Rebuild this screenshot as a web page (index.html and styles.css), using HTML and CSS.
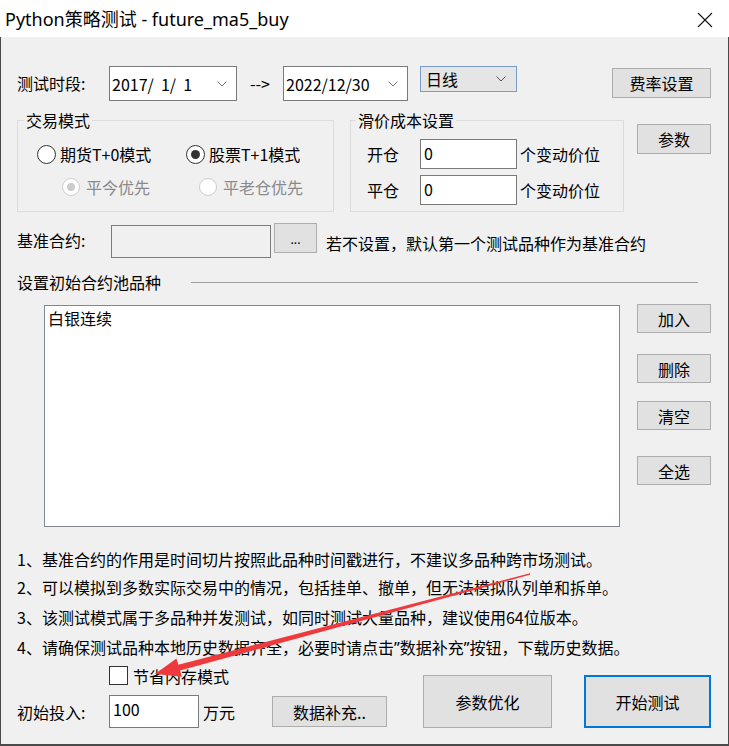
FILE: index.html
```html
<!DOCTYPE html>
<html lang="zh-CN">
<head>
<meta charset="utf-8">
<title>Python策略测试 - future_ma5_buy</title>
<link rel="stylesheet" href="styles.css">
</head>
<body>
<div class="window">
  <div class="titlebar">
    <span class="title">Python策略测试 - future_ma5_buy</span>
    <svg class="close" viewBox="0 0 16 16" width="16" height="16"><path d="M1 1 L15 15 M15 1 L1 15" stroke="#111" stroke-width="1.1" fill="none"/></svg>
  </div>
  <div class="content">
    <div class="row r1">
      <span class="lbl-time">测试时段:</span>
      <div class="combo c1"><span class="ctext">2017/&nbsp;&nbsp;1/&nbsp;&nbsp;1</span><svg class="chev" viewBox="0 0 10 6" width="10" height="6"><path d="M0.5 0.5 L5 5 L9.5 0.5" stroke="#777" stroke-width="1" fill="none"/></svg></div>
      <span class="to">--&gt;</span>
      <div class="combo c2"><span class="ctext">2022/12/30</span><svg class="chev" viewBox="0 0 10 6" width="10" height="6"><path d="M0.5 0.5 L5 5 L9.5 0.5" stroke="#777" stroke-width="1" fill="none"/></svg></div>
      <div class="combo c3"><span class="ctext">日线</span><svg class="chev" viewBox="0 0 10 6" width="10" height="6"><path d="M0.5 0.5 L5 5 L9.5 0.5" stroke="#555" stroke-width="1" fill="none"/></svg></div>
      <div class="btn b-rate">费率设置</div>
    </div>

    <div class="row r2">
      <fieldset class="grp g1">
        <legend>交易模式</legend>
        <div class="rrow rr1">
          <div class="opt o1"><span class="radio"></span><span>期货T+0模式</span></div>
          <div class="opt"><span class="radio checked"></span><span>股票T+1模式</span></div>
        </div>
        <div class="rrow rr2">
          <div class="opt o3 disabled"><span class="radio small checked"></span><span>平今优先</span></div>
          <div class="opt disabled"><span class="radio small"></span><span>平老仓优先</span></div>
        </div>
      </fieldset>
      <fieldset class="grp g2">
        <legend>滑价成本设置</legend>
        <div class="prow">
          <span class="plbl">开仓</span>
          <div class="inp">0</div>
          <span class="unit">个变动价位</span>
        </div>
        <div class="prow prow2">
          <span class="plbl">平仓</span>
          <div class="inp">0</div>
          <span class="unit">个变动价位</span>
        </div>
      </fieldset>
      <div class="btn b-param">参数</div>
    </div>

    <div class="row r3">
      <span class="lbl-base">基准合约:</span>
      <div class="inp-base"></div>
      <div class="btn b-dots">...</div>
      <span class="hint">若不设置，默认第一个测试品种作为基准合约</span>
    </div>

    <div class="row r4">
      <span>设置初始合约池品种</span>
      <div class="sep"></div>
    </div>

    <div class="row r5">
      <div class="list">白银连续</div>
      <div class="side">
        <div class="btn sb">加入</div>
        <div class="btn sb sb2">删除</div>
        <div class="btn sb sb3">清空</div>
        <div class="btn sb sb4">全选</div>
      </div>
    </div>

    <div class="notes">
      <p class="n1">1、基准合约的作用是时间切片按照此品种时间戳进行，不建议多品种跨市场测试。</p>
      <p class="n2">2、可以模拟到多数实际交易中的情况，包括挂单、撤单，但无法模拟队列单和拆单。</p>
      <p class="n3">3、该测试模式属于多品种并发测试，如同时测试大量品种，建议使用64位版本。</p>
      <p class="n3">4、请确保测试品种本地历史数据齐全，必要时请点击<span class="q">”</span>数据补充<span class="q">”</span>按钮，下载历史数据。</p>
    </div>

    <div class="row bottom">
      <div class="left-col">
        <div class="chk-row"><span class="chk"></span><span class="chk-text">节省内存模式</span></div>
        <div class="in-row">
          <span class="lbl-amt">初始投入:</span>
          <div class="inp-amt">100</div>
          <span class="wan">万元</span>
          <div class="btn b-data">数据补充..</div>
        </div>
      </div>
      <div class="btn big b-opt">参数优化</div>
      <div class="btn big b-start">开始测试</div>
    </div>
  </div>

  <svg class="arrow" viewBox="0 0 729 746" width="729" height="746">
    <polygon points="530,573.3 178.4,664.7 176.4,658.4 155,674 182,676.8 180,670.5 530,574.7" fill="#ef3a3d"/>
  </svg>
</div>
</body>
</html>
```

FILE: styles.css
```css
* { box-sizing: border-box; }

body {
  margin: 0;
  font-family: "Noto Sans CJK SC", sans-serif;
  font-size: 16px;
  line-height: 20px;
  color: #000;
  background: #f0f0f0;
}

.window {
  width: 729px;
  height: 746px;
  position: relative;
  display: flex;
  flex-direction: column;
}

.titlebar {
  height: 37px;
  background: #fff;
  display: flex;
  align-items: center;
  padding: 0 16px 0 5px;
}

.title {
  font-family: "Noto Sans", "Noto Sans CJK SC", sans-serif;
  font-size: 18px;
  line-height: 24px;
}

.close {
  margin-left: auto;
  margin-top: 3px;
}

.content {
  flex: 1;
  background: #f0f0f0;
  border: 1px solid #4a4a4a;
  border-top: none;
  border-bottom-width: 2px;
  padding: 0 17px 0 16px;
}

.row { display: flex; }

/* Row 1 */
.r1 { margin-top: 29px; align-items: flex-start; height: 35px; }
.lbl-time { width: 92px; line-height: 35px; }
.combo {
  display: flex;
  align-items: center;
  background: #fff;
  border: 1px solid #7a7a7a;
  padding-left: 2px;
}
.combo .chev { margin-left: auto; margin-right: 9px; }
.c1 { width: 128px; height: 35px; }
.c2 { width: 125px; height: 35px; }
.c3 {
  margin-left: 12px;
  width: 97px;
  height: 26px;
  background: #e5e5e5;
  border-color: #7a9cc8;
  padding-left: 5px;
  align-items: flex-start;
  padding-top: 2px;
}
.c3 .chev { margin-top: 7px; margin-right: 10px; }
.ctext { white-space: pre; }
.to { margin-left: 13px; width: 33px; line-height: 35px; }

.btn {
  background: #e1e1e1;
  border: 1px solid #adadad;
  display: flex;
  align-items: center;
  justify-content: center;
}
.b-rate { margin-left: auto; margin-top: 2px; width: 99px; height: 30px; }

/* Row 2 */
.r2 { margin-top: 10px; align-items: flex-start; }
.grp {
  margin: 0;
  border: 1px solid #dcdcdc;
  min-width: 0;
}
.grp legend {
  line-height: 18px;
  padding: 0 2px;
  margin-left: 6px;
}
.g1 { width: 317px; padding: 15px 0 14px 0; }
.g2 { width: 274px; margin-left: 16px; padding: 10px 0 6px 0; }
.g2 legend { margin-left: 5px; }

.rrow { display: flex; align-items: center; height: 20px; }
.rr2 { margin-top: 13px; }
.opt { display: flex; align-items: center; }
.o1 { margin-left: 19px; width: 149px; }
.o3 { margin-left: 44px; width: 137px; }
.radio {
  width: 19px;
  height: 19px;
  border-radius: 50%;
  border: 1px solid #333;
  background: #fff;
  margin-right: 4px;
  display: flex;
  align-items: center;
  justify-content: center;
}
.radio.checked::after {
  content: "";
  width: 9px;
  height: 9px;
  border-radius: 50%;
  background: #333;
}
.radio.small { width: 18px; height: 18px; margin-right: 6px; }
.disabled { color: #8a8a8a; }
.disabled .radio { border-color: #cccccc; }
.disabled .radio.checked::after { background: #cccccc; width: 8px; height: 8px; }

.prow { display: flex; align-items: center; height: 30px; }
.prow2 { margin-top: 6px; }
.plbl { margin-left: 16px; width: 53px; }
.inp {
  width: 97px;
  height: 30px;
  background: #fff;
  border: 1px solid #7a7a7a;
  padding: 3px 0 0 3px;
}
.unit { margin-left: 3px; }

.b-param { margin-left: auto; margin-top: 13px; width: 74px; height: 30px; }

/* Row 3 */
.r3 { margin-top: 11px; align-items: flex-start; height: 35px; }
.lbl-base { width: 94px; margin-top: 7px; }
.inp-base {
  margin-top: 2px;
  width: 160px;
  height: 33px;
  background: #f0f0f0;
  border: 1px solid #7a7a7a;
}
.b-dots {
  margin-left: 3px;
  width: 43px;
  height: 30px;
  font-size: 12px;
  padding-top: 2px;
}
.hint { margin-left: 9px; margin-top: 10px; }

/* Row 4 */
.r4 { margin-top: 15px; align-items: center; height: 18px; }
.sep {
  flex: 1;
  margin-left: 30px;
  margin-right: 13px;
  height: 1px;
  background: #a0a0a0;
}

/* Row 5 */
.r5 { margin-top: 13px; align-items: flex-start; }
.list {
  margin-left: 27px;
  margin-top: 1px;
  width: 576px;
  height: 222px;
  background: #fff;
  border: 1px solid #828790;
  padding: 2px 3px;
}
.side { margin-left: auto; display: flex; flex-direction: column; width: 74px; }
.sb { height: 29px; }
.sb2 { margin-top: 21px; }
.sb3 { margin-top: 18px; }
.sb4 { margin-top: 26px; }

/* Notes */
.notes p { margin: 0; height: 20px; white-space: nowrap; }
.notes .n1 { margin-top: 22px; }
.notes .n2 { margin-top: 8px; }
.notes .n3 { margin-top: 10px; }
.q { font-family: "Noto Sans", sans-serif; }

/* Bottom */
.bottom { margin-top: 9px; align-items: flex-start; }
.left-col { display: flex; flex-direction: column; width: 370px; }
.chk-row { display: flex; align-items: center; height: 19px; margin-left: 92px; }
.chk {
  width: 19px;
  height: 19px;
  border: 1px solid #333;
  background: #fff;
}
.chk-text { margin-left: 5px; }
.in-row { display: flex; align-items: center; margin-top: 10px; height: 33px; }
.lbl-amt { width: 92px; }
.inp-amt {
  width: 90px;
  height: 33px;
  background: #fff;
  border: 1px solid #7a7a7a;
  padding: 3px 0 0 3px;
}
.wan { margin-left: 4px; }
.b-data { margin-left: auto; width: 115px; height: 31px; }
.big { margin-top: 9px; height: 53px; }
.b-opt { margin-left: 36px; width: 129px; }
.b-start { margin-left: 32px; width: 127px; border: 2px solid #0078d7; }

/* Annotation arrow overlay */
.arrow {
  position: absolute;
  top: 0;
  left: 0;
  pointer-events: none;
}
```
